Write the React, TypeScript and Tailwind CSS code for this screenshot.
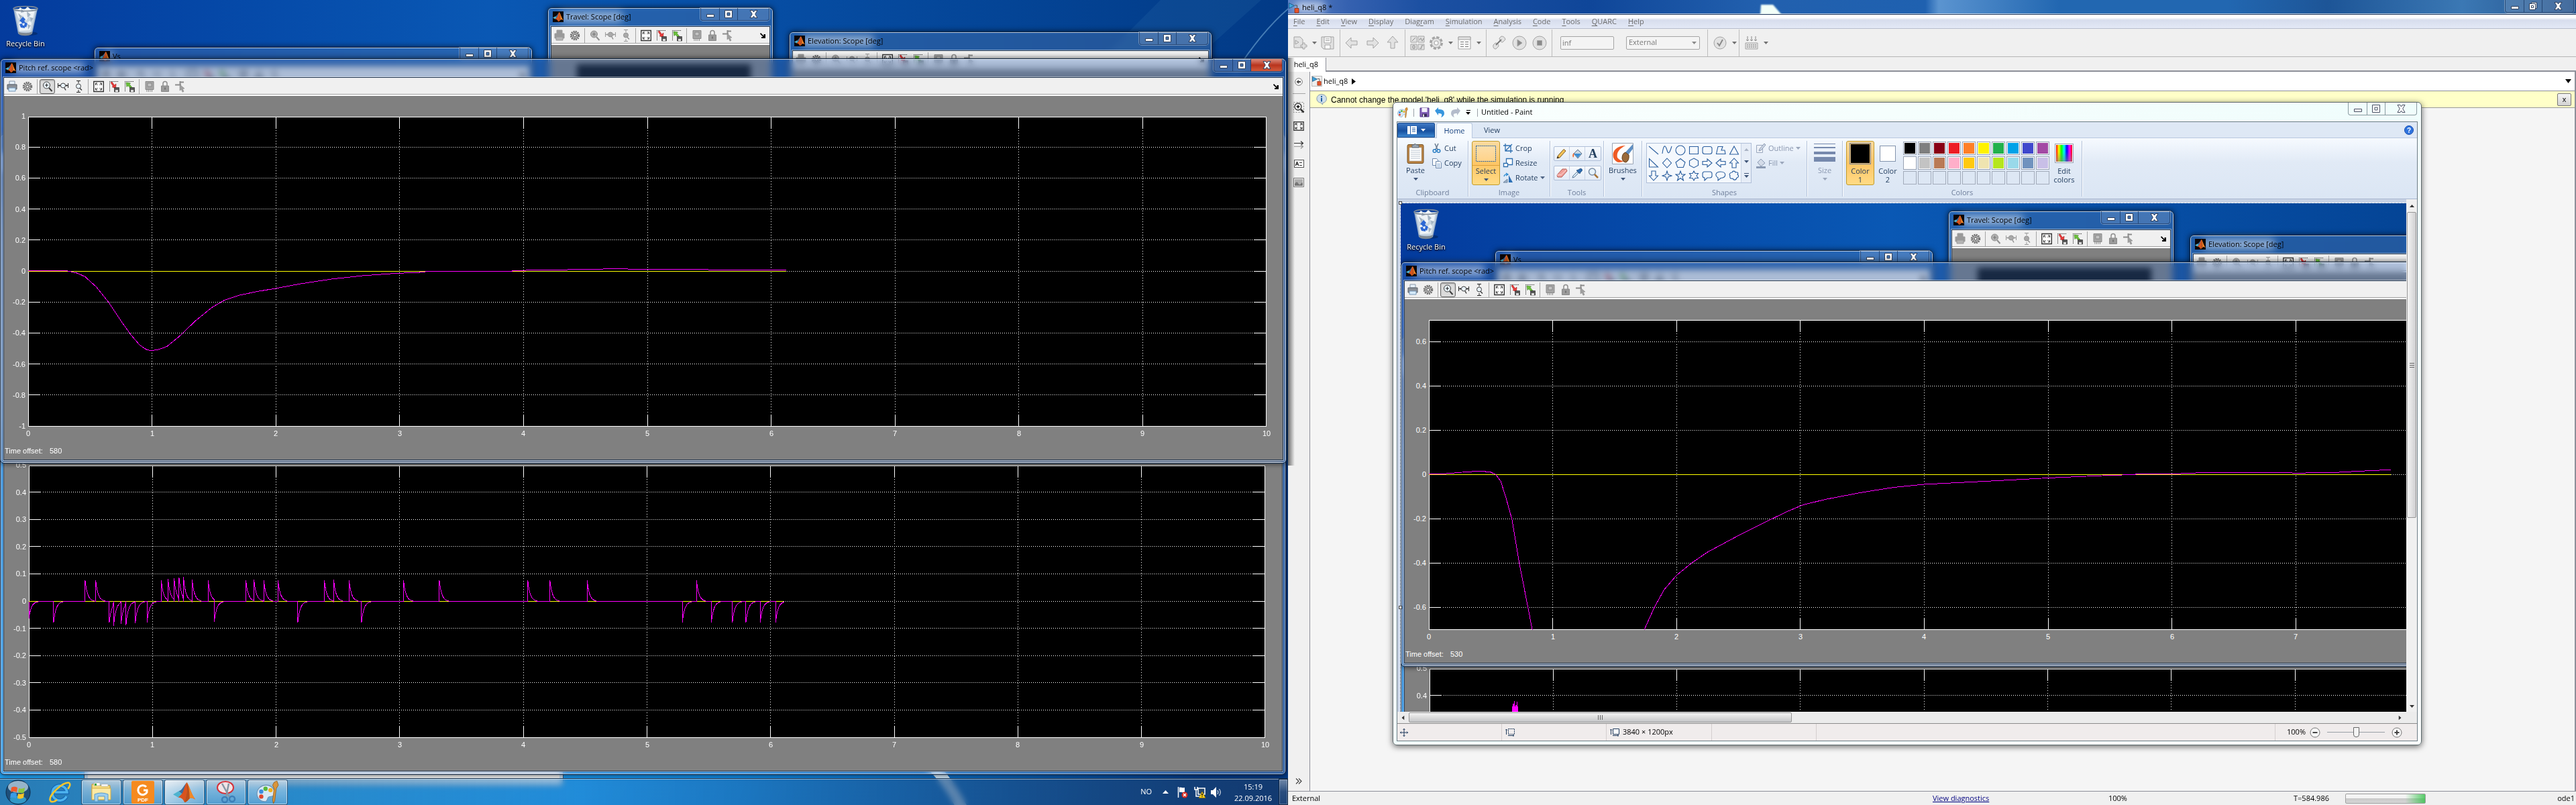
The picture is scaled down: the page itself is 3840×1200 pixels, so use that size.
import React from "react";

const UI = "font-['Open_Sans','Noto_Sans',sans-serif]";
const SANS = "font-['Liberation_Sans',Arial,sans-serif]";

/* ------------------------------------------------------------------ */
/* Signal data                                                         */
/* ------------------------------------------------------------------ */

type Pt = [number, number];

const PITCH_580: Pt[] = [
  [0, 0.003], [0.32, 0.002], [0.4, -0.012], [0.46, -0.035], [0.55, -0.1], [0.65, -0.2], [0.75, -0.32],
  [0.83, -0.41], [0.9, -0.475], [0.95, -0.503], [0.99, -0.512], [1.05, -0.505], [1.12, -0.485], [1.22, -0.42],
  [1.35, -0.32], [1.48, -0.235], [1.58, -0.188], [1.7, -0.155], [1.85, -0.13], [2, -0.11], [2.2, -0.08],
  [2.45, -0.05], [2.7, -0.028], [2.95, -0.014], [3.2, -0.005], [3.21, 0], [3.9, 0], [3.92, 0.005],
  [4.3, 0.01], [4.7, 0.016], [5.2, 0.013], [5.6, 0.01], [6.12, 0.008],
];

const PITCH_530: Pt[] = [
  [0, 0.002], [0.13, 0.004], [0.3, 0.012], [0.42, 0.016], [0.5, 0.011], [0.54, 0], [0.58, -0.03], [0.62, -0.1],
  [0.67, -0.2], [0.73, -0.4], [0.8, -0.6], [0.835, -0.7], [0.84, -0.8], [1.7, -0.8], [1.74, -0.7], [1.82, -0.6],
  [1.9, -0.52], [2, -0.455], [2.12, -0.4], [2.25, -0.35], [2.5, -0.275], [2.77, -0.2], [2.9, -0.165],
  [3.02, -0.137], [3.2, -0.112], [3.5, -0.08], [3.75, -0.058], [4, -0.044], [4.5, -0.03], [5, -0.015],
  [5.5, -0.003], [5.7, 0], [5.72, 0.004], [6.05, 0.004], [6.25, 0.009], [6.9, 0.009], [7, 0.007],
  [7.3, 0.009], [7.5, 0.015], [7.77, 0.022],
];

const SPIKES: Pt[] = [
  [0, -0.063], [0.2, -0.078], [0.455, 0.078], [0.54, 0.078], [0.65, -0.078], [0.685, -0.09], [0.745, -0.083],
  [0.785, -0.088], [0.86, -0.081], [0.955, -0.078], [1.07, 0.078], [1.125, 0.083], [1.175, 0.084],
  [1.215, 0.087], [1.25, 0.09], [1.32, 0.08], [1.45, 0.077], [1.5, -0.074], [1.755, 0.077], [1.82, 0.08],
  [1.9, 0.077], [2.015, 0.077], [2.175, -0.078], [2.39, 0.077], [2.465, 0.08], [2.59, 0.077], [2.69, -0.078],
  [3.03, 0.077], [3.32, 0.077], [4.035, 0.077], [4.215, 0.077], [4.515, 0.077], [5.285, -0.078],
  [5.4, 0.077], [5.52, -0.078], [5.69, -0.078], [5.8, -0.078], [5.915, -0.078], [6.04, -0.078],
];

function decayTrace(spikes: Pt[], end: number): Pt[] {
  const out: Pt[] = [];
  spikes.forEach(([t, a], i) => {
    const next = i + 1 < spikes.length ? spikes[i + 1][0] : end;
    out.push([t, 0], [t, a]);
    for (let d = 0.008; d < 0.08 && t + d < next; d += 0.008) {
      out.push([t + d, a * Math.exp(-d / 0.02)]);
    }
    if (t + 0.08 < next) out.push([t + 0.08, 0]);
  });
  out.push([end, 0]);
  return out;
}

const VS_580 = decayTrace(SPIKES, 6.105);
const VS_530: Pt[] = [
  [0, 0], [0.668, 0], [0.67, 0.36], [0.675, 0], [0.678, 0.37], [0.682, 0], [0.686, 0.38], [0.69, 0],
  [0.694, 0.36], [0.698, 0], [0.7, 0.365], [0.704, 0], [0.708, 0.378], [0.712, 0], [0.715, 0.36], [0.718, 0],
];

/* ------------------------------------------------------------------ */
/* Scope plot                                                          */
/* ------------------------------------------------------------------ */

type PlotProps = {
  id: string;
  view: [number, number, number, number];
  box: [number, number, number, number];
  limit: number;
  ticks: string[];
  labels: string[];
  times: number[];
  trace: Pt[];
  end: number;
  offset?: string;
};

function Plot({ id, view, box, limit, ticks, labels, times, trace, end, offset }: PlotProps) {
  const [x0, y0, x1, y1] = box;
  const mid = (y0 + y1) / 2;
  const sx = (t: number) => x0 + ((x1 - x0) * t) / 10;
  const sy = (v: number) => mid - (v * (y1 - y0)) / (2 * limit);
  const snap = (n: number) => Math.floor(n) + 0.5;
  const zero = snap(mid - 1);
  const pts = trace.map(([t, v]) => `${sx(t).toFixed(1)},${(zero + sy(v) - mid).toFixed(1)}`).join(" ");
  return (
    <svg viewBox={view.join(" ")} className={`block w-full flex-1 min-h-0 bg-[#808080] ${SANS}`} role="img" aria-label="Scope plot">
      <defs>
        <clipPath id={id}>
          <rect x={x0} y={y0} width={x1 - x0} height={y1 - y0} />
        </clipPath>
      </defs>
      <rect x={x0} y={y0} width={x1 - x0} height={y1 - y0} fill="#000" />
      <g stroke="#fff" shapeRendering="crispEdges">
        {[1, 2, 3, 4, 5, 6, 7, 8, 9].map((t) => {
          const x = snap(sx(t));
          return (
            <g key={t}>
              <line x1={x} x2={x} y1={y0} y2={y0 + 18} />
              <line x1={x} x2={x} y1={y1 - 18} y2={y1} />
              <line x1={x} x2={x} y1={y0 + 20} y2={y1 - 18} strokeDasharray="1 3" />
            </g>
          );
        })}
        {ticks
          .filter((v) => Math.abs(Number(v)) < limit)
          .map((v) => {
            const y = snap(sy(Number(v)) - 1);
            return (
              <g key={v}>
                <line x1={x0} x2={x0 + 18} y1={y} y2={y} />
                <line x1={x1 - 18} x2={x1} y1={y} y2={y} />
                <line x1={x0 + 21} x2={x1 - 18} y1={y} y2={y} strokeDasharray="1 2" />
              </g>
            );
          })}
        <rect x={x0 + 0.5} y={y0 + 0.5} width={x1 - x0 - 1} height={y1 - y0 - 1} fill="none" />
      </g>
      <g clipPath={`url(#${id})`} fill="none" shapeRendering="crispEdges">
        <line x1={x0} x2={sx(end)} y1={zero} y2={zero} stroke="#ff0" />
        <polyline points={pts} stroke="#f0f" />
      </g>
      <g fill="#fff" fontSize="11">
        {labels.map((v) => (
          <text key={v} x={x0 - 4} y={Math.round(sy(Number(v))) + 3} textAnchor="end">{v}</text>
        ))}
        {times.map((t) => (
          <text key={t} x={Math.round(sx(t))} y={y1 + 14} textAnchor="middle">{t}</text>
        ))}
        {offset && <text x="7" y={y1 + 40}>Time offset:</text>}
        {offset && <text x="74" y={y1 + 40}>{offset}</text>}
      </g>
    </svg>
  );
}

/* ------------------------------------------------------------------ */
/* Scope window parts                                                  */
/* ------------------------------------------------------------------ */

function MatlabMark({ size = 16, dark = true }: { size?: number; dark?: boolean }) {
  return (
    <svg width={size} height={size} viewBox="0 0 16 16" className="relative shrink-0" aria-hidden="true">
      {dark && <rect width="16" height="16" fill="#0a0606" />}
      <path d="M0 9.5 4 7.2 6.2 9 3.6 11.6z" fill="#4fb3cf" />
      <path d="M4 7.2c2-.4 3-3 5.2-5.700L7 9.800z" fill="#3a6b9c" />
      <path d="M3.600 11.600 6.200 9C7.700 7 8 3 9.600 1c1.700 1.800 3 8 6 12-2-.9-3.300-1.700-4.600 0-1 1.200-2 2-3 2-.8-2-2-3.400-4.400-3.400z" fill="#d9531e" />
      <path d="M9.600 1c.6 3 .4 8-1.600 14 1-.2 2-1 3-2 1.200-1.600 2.500-1 4.600 0C12.600 9 11.300 2.800 9.600 1z" fill="#f08a28" />
      <path d="M9.600 1c1.500 2.800 2 7 2 11.300-1 .8-2 2.700-3.600 2.700C10 9 10.200 4 9.600 1z" fill="#8c1f12" opacity=".55" />
    </svg>
  );
}

type IconName = "print" | "gear" | "zoom" | "zoomx" | "zoomy" | "fit" | "save" | "restore" | "chip" | "lock" | "select";

function ScopeIcon({ name, off }: { name: IconName; off?: boolean }) {
  const c = off ? "#8f8f8f" : "#3c3c3c";
  const g = "#9a9a9a";
  return (
    <svg width="16" height="18" viewBox="0 0 16 18" fill="none" aria-hidden="true">
      {name === "print" && (
        <>
          <path d="M4 1h8v5H4z" fill={off ? "#9a9a9a" : "#e8f2fb"} stroke={off ? g : "#8796a8"} />
          <path d="M1 6h14v7H1z" fill={off ? "#9a9a9a" : "#8b9097"} stroke={off ? g : "#5a6068"} />
          <path d="M3 11h10v5H3z" fill={off ? "#b5b5b5" : "#d6ebfa"} stroke={off ? g : "#7798b8"} />
        </>
      )}
      {name === "gear" && (
        <>
          <circle cx="8" cy="9" r="6" stroke="#6a6a6a" strokeWidth="2.500" strokeDasharray="2 1.140" />
          <circle cx="8" cy="9" r="4.500" fill="#c9c9c9" stroke="#666" />
          <circle cx="8" cy="9" r="2.200" fill="#fff" stroke="#333" />
        </>
      )}
      {name === "zoom" && (
        <>
          <circle cx="6.500" cy="7" r="5" fill={off ? "#b0b0b0" : "#e9f3fb"} stroke={c} />
          <path d="M4 7h5M6.500 4.500v5" stroke={off ? "#777" : "#222"} />
          <path d="m10 11 4.500 5" stroke={c} strokeWidth="2" />
        </>
      )}
      {name === "zoomx" && (
        <>
          <path d="M.5 4v7M15.500 4v7M1 7.500h3M12 7.500h3M3 6v3M13 6v3" stroke={off ? g : "#222"} />
          <circle cx="8" cy="7.500" r="3.500" fill={off ? "#aaa" : "#e9f3fb"} stroke={c} />
          <path d="m10 11 2 3.500" stroke={c} strokeWidth="1.500" />
        </>
      )}
      {name === "zoomy" && (
        <>
          <path d="M5 .5h6M5 17.500h6M8 1v3M8 14v3" stroke={off ? g : "#222"} />
          <circle cx="8" cy="8.500" r="3.500" fill={off ? "#aaa" : "#e9f3fb"} stroke={c} />
          <path d="m10 11.500 3 3" stroke={c} strokeWidth="1.500" />
        </>
      )}
      {name === "fit" && (
        <>
          <path d="M.8 1.500h14.500v15H.8z" fill="#fff" stroke="#333" strokeWidth="1.400" />
          <path d="M6 4H3.500v3M10 4h2.500v3M6 14H3.500v-3M10 14h2.500v-3M4 4.500l2.500 2.500M12 4.500 9.500 7M4 13.500 6.500 11M12 13.500 9.500 11" stroke="#333" />
        </>
      )}
      {name === "save" && (
        <>
          <path d="M1 1.500h14M1.500 1v15" stroke="#222" strokeDasharray="1 1" />
          <path d="M3 3l2-1 3.500 5L11 5l-.5 7L5 9.500 6.500 8.500z" fill="#ec3a3a" stroke="#a01818" strokeWidth=".6" />
          <path d="M8.500 10.500h7v6.500h-7z" fill="#555" stroke="#222" strokeWidth=".6" />
          <path d="M10 14h4v3h-4z" fill="#ddd" />
        </>
      )}
      {name === "restore" && (
        <>
          <path d="M1 1.500h14M1.500 1v15" stroke="#222" strokeDasharray="1 1" />
          <path d="M3 3l6.500 1L8 5.500l4 5-2 2-4-5L4 9.500z" fill="#6cc23a" stroke="#2f7a12" strokeWidth=".6" />
          <path d="M8.500 10.500h7v6.500h-7z" fill="#555" stroke="#222" strokeWidth=".6" />
          <path d="M10 14h4v3h-4z" fill="#ddd" />
        </>
      )}
      {name === "chip" && (
        <>
          <path d="M2 1.500h12v12H2z" fill="#a6a6a6" stroke="#8a8a8a" />
          <path d="M5 4h6v5H5z" fill="#c4c4c4" stroke="#888" />
          <path d="M4 14v3M6.500 14v3M9 14v3M11.500 14v3" stroke="#8a8a8a" />
        </>
      )}
      {name === "lock" && (
        <>
          <path d="M5 8V4.500a3 3 0 0 1 6 0V8" stroke="#8d8d8d" strokeWidth="1.500" />
          <path d="M2.500 8h11v8.500h-11z" fill="#9b9b9b" stroke="#8a8a8a" />
          <path d="M8 10.500v3" stroke="#666" strokeWidth="1.500" />
        </>
      )}
      {name === "select" && (
        <>
          <path d="M0 6.500h9M7.500 1v6M7 2.500h6" stroke="#8d8d8d" strokeWidth="2" />
          <path d="m7 6 7 6-3 .3 2 4-2 .9-1.700-4L7 15z" fill="#a0a0a0" stroke="#8a8a8a" strokeWidth=".6" />
        </>
      )}
    </svg>
  );
}

function Tool({ name, off, on, label }: { name: IconName; off?: boolean; on?: boolean; label: string }) {
  return (
    <button
      type="button"
      aria-label={label}
      className={`flex h-[22px] w-[23px] shrink-0 items-center justify-center rounded-[3px] ${on ? "border border-[#6d6d6d] bg-[#dcdcdc] shadow-[inset_0_1px_2px_#999]" : ""}`}
    >
      <ScopeIcon name={name} off={off} />
    </button>
  );
}

function Sep() {
  return <span className="mx-[3px] h-[22px] w-px shrink-0 bg-[#a5a5a5]" />;
}

function ScopeToolbar({ live }: { live?: boolean }) {
  return (
    <div className="flex h-[27px] shrink-0 items-center overflow-hidden border-b-2 border-b-white bg-[#f0f0f0] shadow-[inset_0_-1px_0_#a0a0a0]">
      <Tool name="print" off={!live} label="Print" />
      <Tool name="gear" label="Parameters" />
      <Sep />
      <Tool name="zoom" off={!live} on={live} label="Zoom" />
      <Tool name="zoomx" off={!live} label="Zoom X-axis" />
      <Tool name="zoomy" off={!live} label="Zoom Y-axis" />
      <Sep />
      <Tool name="fit" label="Autoscale" />
      <Tool name="save" label="Save current axes settings" />
      <Tool name="restore" label="Restore saved axes settings" />
      <Sep />
      <Tool name="chip" label="Floating scope" />
      <Tool name="lock" label="Lock axes selection" />
      <Tool name="select" label="Signal selection" />
      <button type="button" aria-label="Dock" className="ml-auto mr-[4px] flex h-4 w-3 items-center justify-center">
        <svg width="8" height="8" viewBox="0 0 8 8" aria-hidden="true"><path d="m1 0 4.500 4.500V2H8v6H2V6h2.500L0 1.500z" fill="#000" /></svg>
      </button>
    </div>
  );
}

function CaptionButtons({ tone }: { tone: "glass" | "active" | "light" | "max" }) {
  const light = tone === "light";
  const edge = light ? "border-[#8a9aa0]" : "border-[#16335e]/70";
  const ink = light ? "#4a4f63" : "#2c3e5c";
  return (
    <div className={`flex h-[19px] shrink-0 overflow-hidden rounded-b-[4px] border border-t-0 ${edge} ${light ? "" : "bg-white/15 shadow-[0_0_0_1px_rgba(255,255,255,.35)]"}`}>
      <button type="button" aria-label="Minimize" className={`flex w-[28px] items-center justify-center border-r ${edge}`}>
        <svg width="14" height="12" viewBox="0 0 14 12" aria-hidden="true"><path d="M1.500 6.500h11v4h-11z" fill="#fff" stroke={ink} /></svg>
      </button>
      <button type="button" aria-label="Maximize" className={`flex w-[27px] items-center justify-center border-r ${edge}`}>
        <svg width="12" height="12" viewBox="0 0 12 12" aria-hidden="true">
          {tone === "max" && <path d="M3.500.5h8v9h-8z" fill="#fff" stroke={ink} />}
          <path d={tone === "max" ? "M.5 2.500h9v9h-9zM3.500 5.500h3v3h-3z" : "M.5.500h11v11H.500zM4 4h4v4H4z"} fill="#fff" fillRule="evenodd" stroke={ink} />
        </svg>
      </button>
      <button type="button" aria-label="Close" className={`flex w-[46px] items-center justify-center ${tone === "active" ? "bg-linear-to-b from-[#d98a7c] via-[#b8331c] to-[#d25a3c]" : ""}`}>
        <svg width="13" height="12" viewBox="0 0 13 12" aria-hidden="true"><path d="M1 .5h4L6.500 3 8 .500h4L8.700 6l3.300 5.500H8L6.500 9 5 11.500H1L4.300 6z" fill="#fff" stroke={ink} /></svg>
      </button>
    </div>
  );
}

function ScopeWindow({ place, title, active, children }: { place: string; title?: string; active?: boolean; children: React.ReactNode }) {
  return (
    <section
      className={`absolute flex flex-col rounded-[6px] border border-[#0c2340] px-[5px] pb-[5px] shadow-[inset_0_0_0_1px_rgba(255,255,255,.65),0_0_9px_rgba(0,0,0,.7)] backdrop-blur-[5px] backdrop-brightness-85 ${active ? "bg-[#5595f0]/28" : "bg-[#6a9ee8]/30"} ${place}`}
    >
      <header className="flex h-[28px] shrink-0 items-start">
        <div className="relative flex items-center gap-[4px] pl-[2px] pt-[5px]">
          {title && <span className="absolute inset-x-[12px] bottom-0 top-[5px] rounded-full bg-white/50 blur-[6px]" />}
          <MatlabMark />
          {title && <h2 className={`${UI} relative whitespace-nowrap text-[11px] leading-4 text-black`}>{title}</h2>}
        </div>
        <div className="ml-auto"><CaptionButtons tone={active ? "active" : "glass"} /></div>
      </header>
      <div className="flex min-h-0 flex-1 flex-col overflow-hidden shadow-[0_0_0_1px_#22364f,0_0_0_2px_rgba(255,255,255,.45)]">{children}</div>
    </section>
  );
}

function RecycleBin() {
  return (
    <div className="absolute left-[2px] top-[8px] flex w-[72px] flex-col items-center">
      <svg width="38" height="46" viewBox="0 0 38 46" aria-hidden="true">
        <ellipse cx="24" cy="42" rx="13" ry="3" fill="#02204f" opacity=".5" />
        <path d="M1 5 8 42c3 3 18 3 21 0L37 5z" fill="#aebfcf" opacity=".9" />
        <path d="M3 6 9 39c3 2 16 2 19 0L35 6z" fill="#cfdae5" opacity=".85" />
        <path d="m5 10 6-7 6 4 5-5 6 5 5-1-3 14-6-4-4 7-5-8-6 5zM9 26l5-4 5 6 6-5 3 3-2 11-16 1z" fill="#eef3f7" />
        <path d="m8 12 6 4-2 5zM21 9l6 5-5 4zM22 28l5 2-4 6zM13 5l4 5-5 1zM26 18l5 1-4 5z" fill="#a3b3c2" />
        <ellipse cx="19" cy="5" rx="18" ry="3.500" fill="none" stroke="#7f8b98" strokeWidth="1.500" />
        <path d="m10 23 5-6 4 4-2 2 2 3-5 1-1-2zM10 28l4-1 1 3h3v4l-6-1zM18 25l4 2-2 6-3-2z" fill="#2c68d4" />
        <path d="M8 39c4 3 18 3 21 0l-1 4c-4 3-15 3-19 0z" fill="#7f8890" />
      </svg>
      <span className={`${UI} mt-[3px] whitespace-nowrap text-[11px] leading-4 text-white [text-shadow:0_1px_2px_#000,0_1px_3px_#000]`}>Recycle Bin</span>
    </div>
  );
}

function Wallpaper() {
  return (
    <div className="absolute inset-0 bg-linear-to-r from-[#043b9d] via-[#0a58b4] via-38% to-[#023a86]">
      <div className="absolute inset-0 bg-[radial-gradient(ellipse_1500px_800px_at_15%_92%,#27b0ff_0%,#118be6_55%,transparent_100%)]" />
      <svg viewBox="0 0 1920 1200" preserveAspectRatio="none" className="absolute inset-0 h-full w-full" aria-hidden="true">
        <path d="M1840 110Q1885 40 1930 5" stroke="#7fb5dc" strokeWidth="2" opacity=".55" fill="none" />
        <path d="M1640 90 1730 0h150L1780 90z" fill="#3a7ab4" opacity=".18" />
        <path d="M1375 1130q35 25 62 80" stroke="#e8f6ff" strokeWidth="16" fill="none" opacity=".9" />
        <path d="M0 260q12 200 0 430z" fill="#d8ecff" opacity=".8" />
      </svg>
    </div>
  );
}

const TICKS_1 = ["1", "0.8", "0.6", "0.4", "0.2", "0", "-0.2", "-0.4", "-0.6", "-0.8", "-1"];
const TICKS_07 = ["0.6", "0.4", "0.2", "0", "-0.2", "-0.4", "-0.6"];
const TICKS_05 = ["0.5", "0.4", "0.3", "0.2", "0.1", "0", "-0.1", "-0.2", "-0.3", "-0.4", "-0.5"];
const TIMES = [0, 1, 2, 3, 4, 5, 6, 7, 8, 9, 10];

function Desktop({ capture, children }: { capture?: boolean; children?: React.ReactNode }) {
  const key = capture ? "cap" : "live";
  return (
    <div className="relative h-full w-full overflow-hidden">
      <Wallpaper />
      <RecycleBin />
      {!capture && (
        <div className="absolute left-[125px] top-[900px] h-[272px] w-[715px] rounded-[6px] border border-[#33597f] bg-[#c5dcf0] p-[5px]">
          <div className="h-full bg-[#f4f4f4]" />
        </div>
      )}
      <ScopeWindow place="left-0 top-[200px] h-[955px] w-[1917px]">
        <ScopeToolbar />
        <Plot
          id={`${key}-vs`}
          view={[6, 256, 1905, 893]}
          box={[43, 694, 1886, 1100]}
          limit={0.5}
          ticks={TICKS_05}
          labels={capture ? ["0.5", "0.4"] : TICKS_05}
          times={capture ? [] : TIMES}
          trace={capture ? VS_530 : VS_580}
          end={capture ? 7.77 : 6.105}
          offset={capture ? undefined : "580"}
        />
      </ScopeWindow>
      <ScopeWindow place="left-[140px] top-[70px] h-[120px] w-[654px]" title="Vs">
        <ScopeToolbar />
        <div className="flex-1 bg-[#f0f0f0]" />
      </ScopeWindow>
      <ScopeWindow place="left-[816px] top-[11px] h-[180px] w-[337px]" title="Travel: Scope [deg]">
        <ScopeToolbar />
        <div className="flex-1 bg-[#808080] pl-[38px] pr-[28px] pt-[29px]"><div className="h-full bg-black" /></div>
      </ScopeWindow>
      <ScopeWindow place="left-[1176px] top-[47px] h-[150px] w-[631px]" title="Elevation: Scope [deg]">
        <ScopeToolbar />
        <div className="flex-1 bg-[#808080]" />
      </ScopeWindow>
      <ScopeWindow place="left-0 top-[87px] h-[604px] w-[1918px]" title="Pitch ref. scope <rad>" active>
        <ScopeToolbar live />
        <Plot
          id={`${key}-pitch`}
          view={[6, 143, 1906, 542]}
          box={[42, 174, 1888, 636]}
          limit={capture ? 0.7 : 1}
          ticks={capture ? TICKS_07 : TICKS_1}
          labels={capture ? TICKS_07 : TICKS_1}
          times={capture ? TIMES.slice(0, 8) : TIMES}
          trace={capture ? PITCH_530 : PITCH_580}
          end={capture ? 7.77 : 6.12}
          offset={capture ? "530" : "580"}
        />
      </ScopeWindow>
      {children}
    </div>
  );
}

/* ------------------------------------------------------------------ */
/* Taskbar                                                             */
/* ------------------------------------------------------------------ */

function TaskButton({ label, active, children }: { label: string; active?: boolean; children: React.ReactNode }) {
  return (
    <button
      type="button"
      aria-label={label}
      className={`flex h-[38px] w-[60px] items-center justify-center rounded-[3px] border border-[#123a5e]/80 shadow-[inset_0_0_0_1px_rgba(255,255,255,.55)] ${active ? "bg-linear-to-br from-white/85 to-white/30" : "bg-linear-to-b from-white/50 to-white/20"}`}
    >
      {children}
    </button>
  );
}

function Palette({ size }: { size: number }) {
  return (
    <svg width={size} height={size} viewBox="0 0 32 32" aria-hidden="true">
      <path d="M14 6C6 6 1 12 1 18s5 11 11 11c4 0 3-4 5-6s6 0 8-3c3-6-3-14-11-14z" fill="#d7e8f5" stroke="#6b8fb0" />
      <circle cx="7" cy="15" r="3" fill="#3b8de0" /><circle cx="13" cy="11" r="3" fill="#58b83a" />
      <circle cx="20" cy="13" r="3" fill="#f2b01e" /><circle cx="7" cy="22" r="3" fill="#e0452e" />
      <path d="m25 2 4-2 2 6-3 5-2 17-2 4-1-5 2-16-2-5z" fill="#d9953c" stroke="#8a5515" strokeWidth=".7" />
    </svg>
  );
}

function Taskbar() {
  return (
    <footer className="absolute inset-x-0 bottom-0 flex h-[40px] items-center border-t border-[#14304f] bg-linear-to-r from-[#2c6f9f]/75 via-[#2e80c0]/45 via-45% to-[#163a6c]/85 shadow-[inset_0_1px_0_rgba(255,255,255,.5)] backdrop-blur-[4px]">
      <button type="button" aria-label="Start" className="ml-[8px] h-[38px] w-[38px] shrink-0">
        <svg width="38" height="38" viewBox="0 0 38 38" aria-hidden="true">
          <circle cx="19" cy="19" r="18" fill="#1f4f7a" stroke="#0d2b47" />
          <ellipse cx="19" cy="11" rx="15" ry="9" fill="#bfd6e6" opacity=".75" />
          <ellipse cx="19" cy="30" rx="12" ry="6" fill="#39b8e8" opacity=".7" />
          <path d="M9 12c4-2 6-1 9 0l-1 7c-3-1-6-2-9 0z" fill="#f0592a" />
          <path d="M20 13c3 1 6 1 9-1l-1 7c-3 2-6 1-9 0z" fill="#8cc63e" />
          <path d="M8 21c3-2 6-1 9 0l-1 7c-3-1-6-2-9 0z" fill="#3a9be6" />
          <path d="M19 21c3 1 6 1 9-1l-1 7c-3 2-6 2-9 1z" fill="#fcc426" />
        </svg>
      </button>
      <button type="button" aria-label="Internet Explorer" className="ml-[26px] h-[34px] w-[34px] shrink-0">
        <svg width="34" height="34" viewBox="0 0 34 34" fill="none" aria-hidden="true">
          <path d="M27 23a11 11 0 1 1 1-6H10" stroke="#1667b3" strokeWidth="6" />
          <path d="M27 23a11 11 0 1 1 1-6H10" stroke="#4db4ef" strokeWidth="3.500" />
          <path d="M3 30C-1 22 22 1 31 3c3 2 0 7-2 9" stroke="#f7c62c" strokeWidth="2.500" />
          <path d="M3 30c3 3 8 0 10-2" stroke="#f7c62c" strokeWidth="2.500" />
        </svg>
      </button>
      <div className="ml-[15px] flex gap-[2px]">
        <TaskButton label="Windows Explorer">
          <svg width="34" height="30" viewBox="0 0 34 30" aria-hidden="true">
            <path d="M3 3h10l2 2h15v21H3z" fill="#f5dc82" stroke="#c79a2c" />
            <path d="M6 1h9v4H6zM17 3h10v3H17z" fill="#fff" stroke="#aaa" strokeWidth=".6" />
            <path d="M7 2h3v3H7z" fill="#3aa63a" /><path d="M3 9h28v17H3z" fill="#fbe9a4" stroke="#d6ad45" />
            <path d="M7 29V18q10-4 20 0v11h-5v-8H12v8z" fill="#9ccdee" stroke="#5b9cc9" />
          </svg>
        </TaskButton>
        <TaskButton label="PDF reader">
          <span className={`${SANS} relative flex h-[34px] w-[34px] flex-col items-center justify-end rounded-[2px] bg-[#f58a1f] text-[8px] font-bold leading-[10px] text-white`}>
            <svg width="20" height="20" viewBox="0 0 20 20" fill="none" aria-hidden="true"><path d="M15 5a7 7 0 1 0 1 8v-3h-5" stroke="#fff" strokeWidth="3" /></svg>
            PDF
          </span>
        </TaskButton>
        <TaskButton label="MATLAB" active><MatlabMark size={34} dark={false} /></TaskButton>
        <TaskButton label="Snipping Tool">
          <svg width="34" height="34" viewBox="0 0 34 34" fill="none" aria-hidden="true">
            <ellipse cx="16" cy="10" rx="12" ry="9" fill="#f2e4e6" stroke="#d4323a" strokeWidth="2" />
            <path d="M11 4 23 26M21 4 17 24" stroke="#8797a5" strokeWidth="2.500" />
            <circle cx="15" cy="28" r="4" stroke="#3c7fb8" strokeWidth="2.500" /><circle cx="26" cy="27" r="4" stroke="#3c7fb8" strokeWidth="2.500" />
          </svg>
        </TaskButton>
        <TaskButton label="Paint"><Palette size={34} /></TaskButton>
      </div>
      <div className={`${UI} ml-auto flex items-center text-[11px] leading-[17px] text-white`}>
        <span className="mb-[3px] mr-[16px]">NO</span>
        <button type="button" aria-label="Show hidden icons" className="mr-[12px]"><svg width="9" height="5" viewBox="0 0 9 5" aria-hidden="true"><path d="M4.500 0 9 5H0z" fill="#fff" /></svg></button>
        <svg width="18" height="18" viewBox="0 0 18 18" className="mr-[8px]" aria-hidden="true"><path d="M2.500 1v16" stroke="#fff" strokeWidth="1.500" /><path d="M4 2c3-1 4 1 8 0v7c-4 1-5-1-8 0z" fill="#fff" /><circle cx="12" cy="13" r="4.500" fill="#d8281e" /><path d="m10 11 4 4m0-4-4 4" stroke="#fff" strokeWidth="1.500" /></svg>
        <svg width="18" height="18" viewBox="0 0 18 18" className="mr-[6px]" aria-hidden="true"><path d="M6 3h10v9H6z" fill="#27486e" stroke="#fff" strokeWidth="1.500" /><path d="M1 1v4h4V1M3 5v10h6" fill="none" stroke="#fff" strokeWidth="1.500" /><path d="m12 8 5 9.500H7z" fill="#ffd21c" stroke="#8a6a00" strokeWidth=".7" /><path d="M12 11v3m0 1v1" stroke="#000" strokeWidth="1.400" /></svg>
        <svg width="18" height="18" viewBox="0 0 18 18" className="mr-[16px]" fill="none" aria-hidden="true"><path d="M1 6h3l5-5v16l-5-5H1z" fill="#fff" /><path d="M11 6q2 3 0 6M13.500 4q3.500 5 0 10" stroke="#fff" /></svg>
        <time className="mr-[8px] w-[60px] text-center">15:19<br />22.09.2016</time>
        <button type="button" aria-label="Show desktop" className="h-[39px] w-[14px] border border-[#0c2443] bg-linear-to-b from-white/40 via-white/10 to-white/5 shadow-[inset_0_0_0_1px_rgba(255,255,255,.25)]" />
      </div>
    </footer>
  );
}

/* ------------------------------------------------------------------ */
/* Paint                                                               */
/* ------------------------------------------------------------------ */

function Caret({ color = "#3f5578" }: { color?: string }) {
  return <svg width="7" height="4" viewBox="0 0 7 4" className="shrink-0" aria-hidden="true"><path d="M0 0h7L3.500 4z" fill={color} /></svg>;
}

function Group({ label, width, children }: { label: string; width: string; children: React.ReactNode }) {
  return (
    <fieldset className={`flex shrink-0 flex-col pt-[4px] ${width}`}>
      <div className="flex h-[83px] flex-col border-r border-[#b3c2da] shadow-[1px_0_0_#fff]">
        <div className="flex h-[66px] shrink-0">{children}</div>
        <span className="mt-[2px] text-center leading-[17px] text-[#6f7f9b]">{label}</span>
      </div>
    </fieldset>
  );
}

function SmallCommand({ text, caret, off, children }: { text: string; caret?: boolean; off?: boolean; children: React.ReactNode }) {
  return (
    <button type="button" className={`flex h-[22px] items-center gap-[3px] ${off ? "text-[#8b98b0]" : "text-[#1e395b]"}`}>
      <svg width="16" height="16" viewBox="0 0 16 16" fill="none" aria-hidden="true">{children}</svg>
      {text}
      {caret && <Caret color={off ? "#9aa6bb" : "#4f6485"} />}
    </button>
  );
}

const SHAPES = [
  "M1 2l14 12", "M1 13C3-3 6 1 8 8s4 4 7-6", "M15 8a7 7 0 1 1-14 0 7 7 0 0 1 14 0z", "M1.500 2.500h13v11h-13z", "M4 2.500h8q3 0 3 3v5q0 3-3 3H4q-3 0-3-3v-5q0-3 3-3z", "M4 2.500h7L9 8h5l1 5.500H1.500z", "M8 2l6.500 12h-13z",
  "M1.500 1.500v12.500h13z", "M8 1l6.500 7L8 15 1.500 8z", "M8 1.500 15 7l-2.700 7.500H3.700L1 7z", "M8 1l6.500 3.500v7L8 15l-6.500-3.500v-7z", "M1 5.500h7V2l7 6-7 6v-3.500H1z", "M15 5.500H8V2L1 8l7 6v-3.500h7z", "M5 15V8H1.500L8 1l6.500 7H11v7z",
  "M5 1v7H1.500L8 15l6.500-7H11V1z", "M8 1l1.700 5.300L15 8 9.700 9.700 8 15 6.300 9.700 1 8l5.300-1.700z", "M8 1l1.800 5H15l-4.200 3.300L12.500 15 8 11.500 3.500 15l1.700-5.700L1 6h5.200z", "M8 1l2 3.500h4.500L12 8l2.500 3.500H10L8 15l-2-3.500H1.500L4 8 1.500 4.500H6z", "M4 2h8q3 0 3 3v3q0 3-3 3H8l-4 4v-4q-3 0-3-3V5q0-3 3-3z", "M8 2c9 0 9 9 0 9.500L4 15v-4C-1 8 0 2 8 2z", "M5 3c1-3 5-2 5 0 3-1 5 1 3 3 3 2 1 5-1 5-1 4-5 4-6 1-3 1-5-1-4-4-2-2 0-5 3-5z",
];

const ROW1 = ["bg-[#000000]", "bg-[#7f7f7f]", "bg-[#880015]", "bg-[#ed1c24]", "bg-[#ff7f27]", "bg-[#fff200]", "bg-[#22b14c]", "bg-[#00a2e8]", "bg-[#3f48cc]", "bg-[#a349a4]"];
const ROW2 = ["bg-[#ffffff]", "bg-[#c3c3c3]", "bg-[#b97a57]", "bg-[#ffaec9]", "bg-[#ffc90e]", "bg-[#efe4b0]", "bg-[#b5e61d]", "bg-[#99d9ea]", "bg-[#7092be]", "bg-[#c8bfe7]"];
const EMPTY = ["e0", "e1", "e2", "e3", "e4", "e5", "e6", "e7", "e8", "e9"];

function ToolIcons({ row }: { row: number }) {
  const cell = "flex w-[23px] items-center justify-center";
  return (
    <div className="flex h-[22px] rounded-[2px] border border-[#b0bfd8] bg-linear-to-b from-[#f7fafe] to-[#e3ebf7] divide-x divide-[#c8d3e5]">
      {row === 0 ? (
        <>
          <button type="button" aria-label="Pencil" className={cell}><svg width="16" height="16" viewBox="0 0 16 16" aria-hidden="true"><path d="m1 15 1.500-4L11 1.500l3 2.500-9 10z" fill="#f4c257" stroke="#7d5a22" /><path d="m1 15 1-3 2 2z" fill="#222" /></svg></button>
          <button type="button" aria-label="Fill with color" className={cell}><svg width="17" height="17" viewBox="0 0 17 17" aria-hidden="true"><path d="m3 8 6-6 6 6-6 7z" fill="#c9d6e2" stroke="#5b6f87" /><path d="M3 8h11l-5 6z" fill="#3b8fd6" /><path d="M3 7q-3 3-1 7 2-2 1-7z" fill="#f0692c" /></svg></button>
          <button type="button" aria-label="Text" className={`${cell} font-['Liberation_Serif',serif] text-[18px] font-bold leading-4 text-[#23405f]`}>A</button>
        </>
      ) : (
        <>
          <button type="button" aria-label="Eraser" className={cell}><svg width="17" height="15" viewBox="0 0 17 15" aria-hidden="true"><path d="m1 10 8-9h6l1 3-8 9H2z" fill="#f0a09a" stroke="#b45a55" /><path d="m1 10 6-.5 8.500-8" fill="none" stroke="#fbd8d4" /></svg></button>
          <button type="button" aria-label="Color picker" className={cell}><svg width="16" height="16" viewBox="0 0 16 16" aria-hidden="true"><path d="m1 15 1-3 6-6 2 2-6 6z" fill="#d5e6f4" stroke="#5f7d9b" /><path d="m7 4 5 5 1-2q4-3 2-5t-5 1z" fill="#2e6db3" stroke="#17406f" strokeWidth=".7" /></svg></button>
          <button type="button" aria-label="Magnifier" className={cell}><svg width="16" height="16" viewBox="0 0 16 16" aria-hidden="true"><circle cx="6.500" cy="6" r="5" fill="#e6f2fb" stroke="#7a8ea6" strokeWidth="1.500" /><path d="m10 10 5 5" stroke="#a87435" strokeWidth="2.500" /></svg></button>
        </>
      )}
    </div>
  );
}

function Ribbon() {
  const tall = "flex h-[66px] flex-col items-center text-[#1e395b] leading-[13px]";
  return (
    <div className="flex h-[91px] shrink-0 overflow-hidden border-b border-[#a9b7cf] bg-linear-to-b from-[#f6faff] via-[#e1eaf6] via-40% to-[#dbe6f4]">
      <Group label="Clipboard" width="w-[106px]">
        <button type="button" className={`${tall} ml-[12px] w-[30px] pt-[3px]`}>
          <svg width="26" height="32" viewBox="0 0 26 32" className="shrink-0" aria-hidden="true"><rect x="1" y="2.500" width="24" height="28" rx="2" fill="#b98242" stroke="#7b5426" /><path d="M4 7h18v20H4z" fill="#fff" stroke="#aaa" strokeWidth=".6" /><path d="M6 11h14M6 14h14M6 17h14M6 20h14M6 23h14" stroke="#b9c3cf" /><path d="M8 3h3q0-3 4 0h3v4H8z" fill="#9aa5b1" stroke="#5f6b78" /></svg>
          <span className="mt-[2px] mb-[5px]">Paste</span><Caret />
        </button>
        <div className="ml-[9px]">
          <SmallCommand text="Cut"><path d="m5 1 4 9M10 1 6 10" stroke="#6a7c92" strokeWidth="1.500" /><circle cx="4.500" cy="12" r="2.300" stroke="#2c7fc4" strokeWidth="1.500" /><circle cx="10.500" cy="12" r="2.300" stroke="#2c7fc4" strokeWidth="1.500" /></SmallCommand>
          <SmallCommand text="Copy"><path d="M1.500 1.500h6l2 2v8h-8z" fill="#fff" stroke="#6b87ab" /><path d="M6.500 5.500h6l2 2v8h-8z" fill="#fff" stroke="#6b87ab" /><path d="M8 9.500h5M8 11.500h5M8 13.500h5" stroke="#8fb0d8" /></SmallCommand>
        </div>
      </Group>
      <Group label="Image" width="w-[122px]">
        <button type="button" className={`${tall} ml-[5px] w-[42px] rounded-[3px] border border-[#c29b29] bg-linear-to-b from-[#fbdba0] via-[#ffc666] to-[#ffdb85] pt-[6px]`}>
          <svg width="30" height="24" viewBox="0 0 30 24" className="shrink-0" aria-hidden="true"><path d="M.5.500h29v23H.500z" fill="#fff" fillOpacity=".2" stroke="#1f5fa8" strokeDasharray="2 1" /></svg>
          <span className="mt-[5px] w-full border-t border-[#dca03a] pt-px">Select</span><span className="mt-[5px]"><Caret /></span>
        </button>
        <div className="ml-[4px]">
          <SmallCommand text="Crop"><path d="M4 1v11h11M1 4h11v11M4 12 14 2" stroke="#2e6fb0" strokeWidth="1.300" /></SmallCommand>
          <SmallCommand text="Resize"><path d="M5.500 1.500h9v9h-9z" fill="#fff" stroke="#2e6fb0" strokeWidth="1.300" /><path d="M1.500 8.500h6v5h-6z" fill="#fff" stroke="#2e6fb0" strokeWidth="1.300" /></SmallCommand>
          <SmallCommand text="Rotate" caret><path d="M9 4v11h6z" fill="#2b6fb5" /><path d="M7 10v5H1z" fill="#9fb3c9" stroke="#6f86a0" /><path d="M2 6q1-4 5-3M5 1l3 2-3 2" stroke="#2b8ad0" strokeWidth="1.300" /></SmallCommand>
        </div>
      </Group>
      <Group label="Tools" width="w-[80px]">
        <div className="ml-[5px] flex flex-col gap-[7px] pt-[8px]">
          <ToolIcons row={0} />
          <ToolIcons row={1} />
        </div>
      </Group>
      <Group label="" width="w-[57px]">
        <button type="button" className={`${tall} w-[56px] pt-[3px]`}>
          <svg width="32" height="32" viewBox="0 0 32 32" className="shrink-0" aria-hidden="true"><path d="M.5.500h31v31H.500z" fill="#fdfdfd" stroke="#9aa5b5" /><path d="M2 22C-1 9 12 4 20 4 12 8 6 14 8 22q4 5 10 5-11 6-16-5z" fill="#ef5a24" /><path d="M31 2 20 14l4 4 7-9z" fill="#5e8fc4" /><path d="m20 14 5 4q1 8-4 11-5 0-6-6 0-7 5-9z" fill="#9a6a3a" stroke="#5f3d1b" /></svg>
          <span className="mt-[2px] mb-[5px]">Brushes</span><Caret />
        </button>
      </Group>
      <Group label="Shapes" width="w-[246px]">
        <div className="ml-[6px] mt-[3px] flex h-[60px] w-[157px] shrink-0 border border-[#b0bfd8] bg-[#f4f8fd]">
          <div className="grid w-[141px] grid-cols-7 grid-rows-3">
            {SHAPES.map((d, i) => (
              <button key={d} type="button" aria-label={`Shape ${i + 1}`} className="flex items-center justify-center">
                <svg width="16" height="16" viewBox="0 0 16 16" aria-hidden="true"><path d={d} fill="none" stroke="#2a5e9e" strokeWidth="1.100" /></svg>
              </button>
            ))}
          </div>
          <div className="flex w-[15px] flex-col justify-around border-l border-[#c5d1e4] bg-[#e6edf7]">
            <button type="button" aria-label="Scroll up" className="flex rotate-180 justify-center"><Caret color="#a9b3c4" /></button>
            <button type="button" aria-label="Scroll down" className="flex justify-center"><Caret /></button>
            <button type="button" aria-label="More shapes" className="flex flex-col items-center gap-[2px]"><span className="h-px w-[7px] bg-[#3f5578]" /><Caret /></button>
          </div>
        </div>
        <div className="ml-[6px]">
          <SmallCommand text="Outline" caret off><path d="M1.500 3.500h9v11h-9z" fill="#eef2f8" stroke="#9aa8be" /><path d="m5 12 1-3 7-8 2 2-7 8z" fill="#cfd8e6" stroke="#8b9ab3" /></SmallCommand>
          <SmallCommand text="Fill" caret off><path d="m3 7 5-5 6 6-6 5z" fill="#d3dbe8" stroke="#8b9ab3" /><path d="M1 13h14v3H1z" fill="#8b9ab3" /></SmallCommand>
        </div>
      </Group>
      <Group label="" width="w-[53px]">
        <button type="button" className={`${tall} w-[52px] pt-[3px]`}>
          <svg width="32" height="32" viewBox="0 0 32 32" className="shrink-0" aria-hidden="true"><path d="M0 1h32v1H0zM0 6h32v2H0zM0 13h32v4H0zM0 21h32v7H0z" fill="#7689ad" /></svg>
          <span className="mt-[2px] mb-[5px] text-[#8b98b0]">Size</span><Caret color="#9aa6bb" />
        </button>
      </Group>
      <Group label="Colors" width="w-[357px]">
        <button type="button" className={`${tall} ml-[5px] w-[42px] shrink-0 rounded-[3px] border border-[#c29b29] bg-linear-to-b from-[#fbdba0] via-[#ffc666] to-[#ffdb85] pt-[2px]`}>
          <span className="h-[32px] w-[32px] shrink-0 border border-[#6f7f95] bg-black shadow-[inset_0_0_0_1px_#f3c477]" />
          <span className="mt-[3px]">Color</span><span>1</span>
        </button>
        <button type="button" className={`${tall} w-[40px] shrink-0 pt-[7px]`}>
          <span className="h-[24px] w-[24px] shrink-0 border border-[#8394ad] bg-white shadow-[inset_0_0_0_1px_#fff]" />
          <span className="mt-[7px]">Color</span><span>2</span>
        </button>
        <div className="ml-[3px] mt-px grid h-[64px] grid-cols-10 gap-[2px]">
          {[...ROW1, ...ROW2].map((c) => (
            <button key={c} type="button" aria-label="Palette color" className="h-[20px] w-[20px] border border-[#98a2b3] bg-white p-px"><span className={`block h-full w-full ${c}`} /></button>
          ))}
          {EMPTY.map((c) => (
            <button key={c} type="button" aria-label="Custom color" className="h-[20px] w-[20px] border border-[#a2abba] bg-[#dde7f4]" />
          ))}
        </div>
        <button type="button" className={`${tall} ml-[3px] w-[38px] pt-[4px]`}>
          <span className="h-[29px] w-[28px] shrink-0 border border-[#98a2b3] bg-white p-px">
            <span className="block h-full w-full bg-[linear-gradient(to_bottom,transparent_40%,#80808099),linear-gradient(to_right,red,#ff0,lime,cyan,blue,magenta,red)]" />
          </span>
          <span className="mt-[5px]">Edit</span><span>colors</span>
        </button>
      </Group>
    </div>
  );
}

function PaintWindow() {
  return (
    <section className={`${UI} absolute left-[156px] top-[152px] flex h-[959px] w-[1534px] flex-col rounded-[6px] border border-[#5b6a6d] bg-linear-to-br from-[#fafffe] via-[#f0fdfc] to-[#fbffff] px-[6px] pb-[6px] text-[11px] shadow-[inset_0_0_0_1px_#fff,0_2px_10px_rgba(0,0,0,.6)]`}>
      <header className="flex h-[29px] shrink-0 items-start">
        <div className="flex h-[29px] items-center">
          <Palette size={16} />
          <span className="ml-[8px] mr-[8px] h-[12px] w-px bg-[#9aa0a6]" />
          <button type="button" aria-label="Save"><svg width="15" height="15" viewBox="0 0 15 15" aria-hidden="true"><path d="M1 1h13v13H1z" fill="#8461b8" stroke="#56378c" /><path d="M3.500 1h8v6h-8z" fill="#f3f0fa" /><path d="M4 9.500h7V14H4z" fill="#3d2e5e" /><path d="M5 10.500h2V14H5z" fill="#ddd" /></svg></button>
          <button type="button" aria-label="Undo" className="ml-[8px]"><svg width="15" height="15" viewBox="0 0 15 15" aria-hidden="true"><path d="M0 5 5 0v3q9-1 9 6 0 4-5 6 4-7-4-6v3z" fill="#3596de" /></svg></button>
          <button type="button" aria-label="Redo" className="ml-[8px]"><svg width="15" height="15" viewBox="0 0 15 15" aria-hidden="true"><path d="M15 5 10 0v3q-9-1-9 6 0 4 5 6-4-7 4-6v3z" fill="#b4bccb" /></svg></button>
          <button type="button" aria-label="Customize toolbar" className="ml-[8px] flex flex-col items-center gap-[2px]"><span className="h-px w-[6px] bg-black" /><Caret color="#000" /></button>
          <span className="ml-[10px] mr-[5px] h-[12px] w-px bg-[#9aa0a6]" />
          <h2 className="text-black">Untitled - Paint</h2>
        </div>
        <div className="ml-auto"><CaptionButtons tone="light" /></div>
      </header>
      <div className="flex min-h-0 flex-1 flex-col shadow-[0_0_0_1px_#6f7d86]">
        <nav className="flex h-[24px] shrink-0 items-end border-b border-[#b9c8df] bg-[#dee8f5]">
          <button type="button" aria-label="Paint menu" className="flex h-[22px] w-[56px] items-center justify-center gap-[6px] rounded-t-[2px] border border-[#1a4a8c] bg-linear-to-b from-[#3f79c4] via-[#17509f] via-55% to-[#3c86cf]">
            <svg width="14" height="12" viewBox="0 0 14 12" aria-hidden="true"><path d="M0 0h14v12H0z" fill="#fff" /><path d="M4.500 0v12M7 3h5M7 5.500h5M7 8h5" stroke="#1f58a5" /></svg>
            <Caret color="#fff" />
          </button>
          <button type="button" className="relative top-px ml-[2px] h-[23px] w-[54px] rounded-t-[3px] border border-b-0 border-[#b9c8df] bg-[#f6faff] text-[#15407e]">Home</button>
          <button type="button" className="h-[22px] w-[58px] text-[#1e395b]">View</button>
          <button type="button" aria-label="Help" className={`${SANS} mb-[4px] ml-auto mr-[5px] flex h-[14px] w-[14px] items-center justify-center rounded-full border border-[#1b4fae] bg-[#2f74de] text-[10px] font-bold text-white`}>?</button>
        </nav>
        <Ribbon />
        <div className="flex min-h-0 flex-1">
          <div id="canvas" className="relative min-w-0 flex-1 overflow-hidden bg-[#c8d3e5]">
            <div className="ml-[5px] mt-[6px] h-[1200px] w-[1920px] bg-[#3b8ee8] outline-1 outline-dashed outline-white"><Desktop capture /></div>
            <span className="absolute left-[2px] top-[3px] h-[5px] w-[5px] border border-[#444] bg-white" />
            <span className="absolute left-[2px] top-[606px] h-[5px] w-[5px] border border-[#444] bg-white" />
          </div>
          <div className="flex w-[16px] shrink-0 flex-col items-center bg-[#f0f0f0] pt-[8px] pb-[6px]" role="scrollbar" aria-label="Vertical" aria-controls="canvas" aria-valuenow={0}>
            <span className="mb-[7px] rotate-180"><Caret color="#333" /></span>
            <span className="flex h-[456px] w-[14px] flex-col items-center justify-center gap-[2px] rounded-[2px] border border-[#979797] bg-linear-to-r from-[#f4f4f4] to-[#cfcfd1]">
              <i className="h-px w-[7px] bg-[#666]" /><i className="h-px w-[7px] bg-[#666]" /><i className="h-px w-[7px] bg-[#666]" />
            </span>
            <span className="mt-auto"><Caret color="#333" /></span>
          </div>
        </div>
        <div className="flex h-[18px] shrink-0 items-center border-b border-[#8c8c8c] bg-[#ececec] pl-[5px] pr-[22px]" role="scrollbar" aria-label="Horizontal" aria-controls="canvas" aria-valuenow={0}>
          <span className="mr-[5px] rotate-90"><Caret color="#333" /></span>
          <span className="flex h-[15px] w-[571px] items-center justify-center gap-[2px] rounded-[2px] border border-[#979797] bg-linear-to-b from-[#f4f4f4] via-[#dcdcdc] to-[#c4c5c8]">
            <i className="h-[7px] w-px bg-[#666]" /><i className="h-[7px] w-px bg-[#666]" /><i className="h-[7px] w-px bg-[#666]" />
          </span>
          <span className="ml-auto -rotate-90"><Caret color="#333" /></span>
        </div>
        <footer className="flex h-[25px] shrink-0 items-center bg-[#f0ecec] text-black">
          <span className="flex h-full w-[156px] items-center border-r border-[#d5cfcf] pl-[4px]"><svg width="12" height="12" viewBox="0 0 12 12" fill="none" aria-hidden="true"><path d="M6 0v12M0 6h12M4.500 2 6 .500 7.500 2M4.500 10 6 11.500 7.500 10M2 4.500.500 6 2 7.500M10 4.500 11.500 6 10 7.500" stroke="#1e395b" /></svg></span>
          <span className="flex h-full w-[156px] items-center border-r border-[#d5cfcf] pl-[5px]"><svg width="14" height="12" viewBox="0 0 14 12" fill="none" aria-hidden="true"><path d="M4.500.500h9v8h-9z" stroke="#1e395b" strokeDasharray="2 1" /><path d="M1.500 9V1M0 2.500 1.500 1 3 2.500M4 10.500h9M11.500 9.500l1.500 1-1.500 1" stroke="#1e395b" /></svg></span>
          <span className="flex h-full w-[157px] items-center gap-[5px] border-r border-[#d5cfcf] pl-[5px]"><svg width="14" height="12" viewBox="0 0 14 12" fill="none" aria-hidden="true"><path d="M4.500.500h9v8h-9z" fill="#fff" stroke="#1e395b" /><path d="M1.500 9V1M0 2.500 1.500 1 3 2.500M4 10.500h9M11.500 9.500l1.500 1-1.500 1" stroke="#1e395b" /></svg>3840 × 1200px</span>
          <span className="h-full w-[156px] border-r border-[#d5cfcf]" />
          <span className="ml-auto flex h-full items-center border-l border-[#d5cfcf] pl-[17px] pr-[22px]">
            <label htmlFor="zoom" className="mr-[6px]">100%</label>
            <button type="button" aria-label="Zoom out" className="h-[16px] w-[16px]"><svg width="16" height="16" viewBox="0 0 16 16" aria-hidden="true"><circle cx="8" cy="8" r="7" fill="#f6f6f6" stroke="#777" /><path d="M4.500 8h7" stroke="#444" strokeWidth="2" /></svg></button>
            <input id="zoom" type="range" defaultValue={50} className="mx-[10px] h-[16px] w-[86px] appearance-none bg-[linear-gradient(#9aa0a6,#9aa0a6)] bg-[length:100%_1px] bg-center bg-no-repeat [&::-webkit-slider-thumb]:h-[15px] [&::-webkit-slider-thumb]:w-[9px] [&::-webkit-slider-thumb]:appearance-none [&::-webkit-slider-thumb]:rounded-b-[4px] [&::-webkit-slider-thumb]:border [&::-webkit-slider-thumb]:border-[#666] [&::-webkit-slider-thumb]:bg-[#f4f4f4]" />
            <button type="button" aria-label="Zoom in" className="h-[16px] w-[16px]"><svg width="16" height="16" viewBox="0 0 16 16" aria-hidden="true"><circle cx="8" cy="8" r="7" fill="#f6f6f6" stroke="#777" /><path d="M4.500 8h7M8 4.500v7" stroke="#444" strokeWidth="2" /></svg></button>
          </span>
        </footer>
      </div>
    </section>
  );
}

/* ------------------------------------------------------------------ */
/* Simulink editor                                                     */
/* ------------------------------------------------------------------ */

function ModelMark() {
  return (
    <svg width="16" height="16" viewBox="0 0 16 16" className="relative" aria-hidden="true">
      <path d="M9 4h3.500v4" fill="none" stroke="#555" />
      <path d="M.5.500 8.500 4.500l-8 4z" fill="#3fa3dc" stroke="#14507c" strokeWidth=".8" />
      <path d="M9 8.500h6v6.500H9z" fill="#e8542a" stroke="#8c2a10" strokeWidth=".8" />
    </svg>
  );
}

function MenuItem({ pre = "", hot, post }: { pre?: string; hot: string; post: string }) {
  return <button type="button" className="pl-[8px] pr-[9px]">{pre}<u className="underline-offset-2">{hot}</u>{post}</button>;
}

function GreyTool({ label, caret, children }: { label: string; caret?: boolean; children: React.ReactNode }) {
  return (
    <button type="button" aria-label={label} className="flex items-center gap-[7px]">
      <svg width="22" height="22" viewBox="0 0 22 22" fill="#e2e2e2" stroke="#a4a4a4" aria-hidden="true">{children}</svg>
      {caret && <Caret color="#707070" />}
    </button>
  );
}

function ToolGroup({ width, children }: { width: string; children: React.ReactNode }) {
  return <div className={`flex h-[40px] shrink-0 items-center justify-between border-r border-[#bdbdbd] px-[7px] ${width}`}>{children}</div>;
}

function Simulink() {
  return (
    <div className={`${UI} relative flex h-full w-full flex-col overflow-hidden bg-[#f0f0f0] text-[11px] text-black`}>
      <header className="relative flex h-[22px] shrink-0 overflow-hidden border-b border-[#20375c] bg-[linear-gradient(to_right,#5c82c6_0px,#3561b0_90px,#1c50a2_200px,#0f4699_450px,#2260ae_700px,#1f61b0_950px,#5b94d0_970px,#2267b1_1150px,#2267b1_1400px,#1d5597_1550px,#3b78b4_1750px,#24528c_1920px)] shadow-[inset_0_-1px_0_rgba(255,255,255,.7)]">
        <svg width="40" height="16" viewBox="0 0 40 16" className="absolute left-[700px] top-[6px] blur-[1px]" aria-hidden="true"><path d="M5 1h18l13 15H4z" fill="#f2fff8" /></svg>
        <div className="relative flex items-center gap-[4px] pl-px pt-[2px]">
          <span className="absolute inset-x-[10px] inset-y-[2px] rounded-full bg-white/60 blur-[6px]" />
          <ModelMark />
          <h1 className="relative">heli_q8 *</h1>
        </div>
        <div className="ml-auto mr-[3px] h-[18px]"><CaptionButtons tone="max" /></div>
      </header>
      <nav className="flex h-[21px] shrink-0 items-center border-b border-[#b6bccc] bg-linear-to-b from-white from-20% via-[#d7dded] via-40% to-[#e3e9f6] text-[#6d6d6d]">
        <MenuItem hot="F" post="ile" /><MenuItem hot="E" post="dit" /><MenuItem hot="V" post="iew" /><MenuItem hot="D" post="isplay" />
        <MenuItem pre="Diag" hot="r" post="am" /><MenuItem hot="S" post="imulation" /><MenuItem hot="A" post="nalysis" /><MenuItem hot="C" post="ode" />
        <MenuItem hot="T" post="ools" /><MenuItem hot="Q" post="UARC" /><MenuItem hot="H" post="elp" />
      </nav>
      <div className="flex h-[42px] shrink-0 items-center border-b border-[#b5b5b5] text-[#7a7a7a]">
        <ToolGroup width="w-[78px]">
          <GreyTool label="New model" caret><path d="M2 2h9l4 4v12H2z" /><path d="m4 7 5 3-5 3zM12 14h3v-3h3v3h3v3h-3v3h-3v-3h-3z" /></GreyTool>
          <GreyTool label="Save"><path d="M2 2h18v18H5l-3-3z" /><path d="M6 2h10v9H6zM7 14h8v6H7z" fill="#fafafa" /><path d="M8 5h6M8 7.500h6" /></GreyTool>
        </ToolGroup>
        <ToolGroup width="w-[97px]">
          <GreyTool label="Back"><path d="M1 11 9 3v5h9v6H9v5z" /></GreyTool>
          <GreyTool label="Forward"><path d="M20 11 12 3v5H3v6h9v5z" /></GreyTool>
          <GreyTool label="Up"><path d="M11 1 3 10h5v9h6v-9h5z" /></GreyTool>
        </ToolGroup>
        <ToolGroup width="w-[121px]">
          <GreyTool label="Library browser"><path d="M1 1h9v9H1zM12 1h9v9h-9zM1 13h9v8H1zM12 13h9v8h-9z" /><path d="M3 8 8 3M14 7q2-6 3-1t3-2M4 15h3v4H4zM14 19h3v-4h3" fill="none" stroke="#888" /></GreyTool>
          <GreyTool label="Model configuration" caret><circle cx="11" cy="11" r="8" fill="none" strokeWidth="4" strokeDasharray="4 2.280" /><circle cx="11" cy="11" r="7" /><circle cx="11" cy="11" r="3" fill="#fff" /></GreyTool>
          <GreyTool label="Model explorer" caret><path d="M2 2h18v18H2z" fill="#fafafa" /><path d="M2 2h18v4H2z" /><path d="M5 9.500h12M5 13h12M5 16.500h12" stroke="#777" strokeDasharray="5 2" /></GreyTool>
        </ToolGroup>
        <ToolGroup width="w-[98px]">
          <GreyTool label="Connect"><path d="m12 4 3-3q5 0 6 5l-4 4q-4 0-5-6zM3 14l3-3q5 0 5 5l-4 4q-5 0-4-6z" /><path d="m7 14 8-8" stroke="#777" strokeWidth="2" /></GreyTool>
          <GreyTool label="Run"><circle cx="11" cy="11" r="10" /><path d="m8 6 7 5-7 5z" fill="#8a8a8a" /></GreyTool>
          <GreyTool label="Stop"><circle cx="11" cy="11" r="10" /><path d="M7.500 7.500h7v7h-7z" fill="#8a8a8a" /></GreyTool>
        </ToolGroup>
        <input aria-label="Simulation stop time" defaultValue="inf" className="ml-[12px] h-[20px] w-[80px] rounded-[2px] border border-[#a5a5a5] bg-[#f4f4f4] px-[2px]" />
        <div className="relative ml-[18px] mr-[11px]">
          <select aria-label="Simulation mode" defaultValue="External" className="h-[20px] w-[110px] appearance-none rounded-[2px] border border-[#a5a5a5] bg-[#f4f4f4] px-[3px]"><option>External</option></select>
          <span className="pointer-events-none absolute right-[5px] top-[8px]"><Caret color="#8a8a8a" /></span>
        </div>
        <div className="h-[40px] w-px bg-[#bdbdbd]" />
        <ToolGroup width="w-[47px]"><GreyTool label="Update diagram" caret><circle cx="11" cy="11" r="9" /><path d="m7 11 3 4 5-9" fill="none" stroke="#8a8a8a" strokeWidth="2" /></GreyTool></ToolGroup>
        <div className="pl-[7px]"><GreyTool label="Build model" caret><path d="M2 11h18v9H2z" /><path d="M4 14h14M4 17h14" stroke="#777" strokeDasharray="2 1" /><path d="M5 1v7M11 1v7M17 1v7M3 6l2 2 2-2M9 6l2 2 2-2M15 6l2 2 2-2" fill="none" stroke="#888" /></GreyTool></div>
      </div>
      <div className="flex h-[22px] shrink-0 border-b-2 border-[#8d8f99]">
        <button type="button" className="relative top-px h-[21px] w-[57px] border-r border-[#8d8f99] bg-white pr-[11px] text-right">heli_q8</button>
      </div>
      <div className="flex min-h-0 flex-1">
        <aside className="flex w-[33px] shrink-0 flex-col items-center border-r border-[#8d8f99] pt-[9px]">
          <button type="button" aria-label="Hide browser" className="h-[12px]"><svg width="12" height="12" viewBox="0 0 12 12" aria-hidden="true"><circle cx="6" cy="6" r="5.300" fill="#fff" stroke="#777" /><path d="M2.500 6 6 3v2h3v2H6v2z" fill="#444" /></svg></button>
          <span className="mt-[11px] h-px w-[19px] bg-[#a5a5a5]" />
          <button type="button" aria-label="Zoom" className="mt-[11px] h-[18px]"><svg width="18" height="18" viewBox="0 0 18 18" fill="none" aria-hidden="true"><path d="M1.500 1.500h15v15h-15z" stroke="#888" strokeDasharray="2 2" /><circle cx="8" cy="8" r="5" fill="#fff" stroke="#333" strokeWidth="1.300" /><path d="M5.500 8h5M8 5.500v5" stroke="#000" strokeWidth="1.500" /><path d="m12 12 4.500 4.500" stroke="#333" strokeWidth="2.500" /></svg></button>
          <button type="button" aria-label="Fit to view" className="mt-[12px] h-[14px]"><svg width="16" height="14" viewBox="0 0 16 14" fill="none" aria-hidden="true"><path d="M.8.800h14.400v12.400H.800z" fill="#f6f6f6" stroke="#444" strokeWidth="1.400" /><path d="M3 5.500V3h3M13 5.500V3h-3M3 8.500V11h3M13 8.500V11h-3M3 3l3 3M13 3l-3 3M3 11l3-3M13 11l-3-3" stroke="#222" /></svg></button>
          <button type="button" aria-label="Signals" className="mt-[15px] h-[12px]"><svg width="15" height="12" viewBox="0 0 15 12" fill="none" aria-hidden="true"><path d="M0 3.500h13M10 .500l3.500 3-3.500 3" stroke="#333" strokeWidth="1.200" /><path d="M0 8.500h13M10 5.500l3.500 3-3.500 3" stroke="#999" strokeWidth="1.200" /></svg></button>
          <button type="button" aria-label="Annotation" className="mt-[16px] flex h-[12px] w-[15px] items-center justify-center gap-px border border-[#555] bg-white text-[8px] font-bold leading-[10px]">A<span className="h-[5px] w-[4px] border-y border-[#333]" /></button>
          <button type="button" aria-label="Image" className="mt-[15px] h-[14px]"><svg width="16" height="14" viewBox="0 0 16 14" aria-hidden="true"><path d="M.5.500h15v13H.500z" fill="#f0f0f0" stroke="#777" /><path d="M2 2h12v10H2z" fill="#b0b0b0" /><path d="M2 9q3-5 5-1t4 1 3-1v4H2z" fill="#777" /></svg></button>
          <button type="button" aria-label="More" className="mb-[10px] mt-auto h-[9px]"><svg width="10" height="9" viewBox="0 0 10 9" fill="none" aria-hidden="true"><path d="m1 .5 4 4-4 4M5 .500l4 4-4 4" stroke="#444" strokeWidth="1.200" /></svg></button>
        </aside>
        <main className="flex min-w-0 flex-1 flex-col border-r-2 border-[#8d8f99] bg-[#f5f5f5]">
          <div className="flex h-[29px] shrink-0 items-center border-b border-[#8d8f99] bg-white pl-[2px] pr-[5px]">
            <span className="flex h-[16px] w-[16px] items-center justify-center border border-[#bbb] bg-[#eee]"><ModelMark /></span>
            <a href="#heli_q8" className="ml-[2px]">heli_q8</a>
            <svg width="6" height="9" viewBox="0 0 6 9" className="ml-[6px]" aria-hidden="true"><path d="M0 0v9l6-4.500z" /></svg>
            <button type="button" aria-label="History" className="ml-auto"><svg width="9" height="6" viewBox="0 0 9 6" aria-hidden="true"><path d="M0 0h9L4.500 6z" /></svg></button>
          </div>
          <div className={`${SANS} flex h-[25px] shrink-0 items-center gap-[6px] border-b border-[#9a9a9a] bg-[#ffffc8] pl-[9px] pr-[5px] text-[12px]`}>
            <svg width="16" height="16" viewBox="0 0 16 16" aria-hidden="true"><path d="M8 .700c9.500 0 9.500 12 2 12.500L9.500 16 7 13.200C-1.500 12.500-1 .700 8 .700z" fill="#cfdfec" stroke="#8599ad" /><path d="M7 6h2v5.500H7zM7 3h2v2H7z" fill="#1f5f9e" /></svg>
            <span className="pt-[2px]">Cannot change the model 'heli_q8' while the simulation is running</span>
            <button type="button" aria-label="Dismiss" className="ml-auto flex h-[19px] w-[21px] items-center justify-center rounded-[2px] border border-[#777] bg-linear-to-b from-[#f5f5f5] to-[#d2d2d2] text-[11px]">x</button>
          </div>
        </main>
      </div>
      <footer className="flex h-[21px] shrink-0 items-center border-t border-[#8d8f99] pl-[6px]">
        <span className="w-[955px]">External</span>
        <a href="#diagnostics" className="w-[262px] text-[#00007f] underline">View diagnostics</a>
        <span className="w-[276px]">100%</span>
        <span className="w-[77px]">T=584.986</span>
        <span className="h-[15px] w-[120px] rounded-[2px] border border-[#a0a0a0] bg-[linear-gradient(to_right,transparent_75%,#35c24b_105%),linear-gradient(to_bottom,#f4f4f4_45%,#c9c9c9_46%,#d6d6d6)]" role="progressbar" aria-label="Simulation progress" />
        <span className="ml-auto pr-[2px]">ode1</span>
      </footer>
      <div className="pointer-events-none absolute left-0 top-[86px] h-[608px] w-[10px] bg-linear-to-r from-black/55 to-transparent" />
      <PaintWindow />
    </div>
  );
}

export default function App() {
  return (
    <div className="flex h-screen w-full overflow-hidden">
      <div className="h-full w-1/2">
        <Desktop><Taskbar /></Desktop>
      </div>
      <div className="h-full w-1/2">
        <Simulink />
      </div>
    </div>
  );
}
